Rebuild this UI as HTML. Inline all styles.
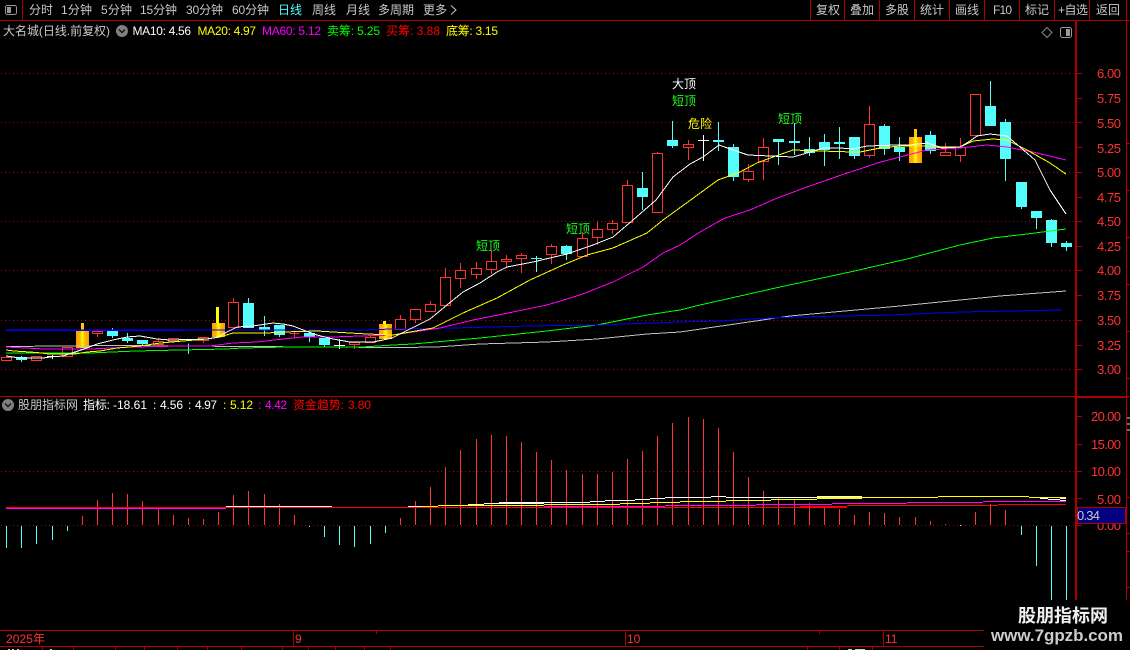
<!DOCTYPE html>
<html><head><meta charset="utf-8"><style>
html,body{margin:0;padding:0;background:#000;width:1130px;height:650px;overflow:hidden}
svg{display:block}
text{font-family:"Liberation Sans","WenQuanYi Zen Hei","Noto Sans CJK SC",sans-serif;font-size:12px;white-space:pre}
.g{fill:#c8c8c8}.ax{fill:#ff3232;font-size:13px}
.ln{fill:none;stroke-width:1;shape-rendering:crispEdges}
</style></head><body>
<svg width="1130" height="650" viewBox="0 0 1130 650" xmlns="http://www.w3.org/2000/svg">
<defs><linearGradient id="gold" x1="0" x2="1" y1="0" y2="0"><stop offset="0" stop-color="#ff9a00"/><stop offset=".3" stop-color="#ffb400"/><stop offset=".5" stop-color="#ffff00"/><stop offset=".7" stop-color="#ffb400"/><stop offset="1" stop-color="#ff9a00"/></linearGradient>
<pattern id="dot" x="1" y="0" width="4" height="1" patternUnits="userSpaceOnUse"><rect width="1" height="1" fill="#9a0a0a" shape-rendering="crispEdges"/></pattern></defs>
<rect width="1130" height="650" fill="#000"/>

<!-- grid -->
<g fill="url(#dot)" shape-rendering="crispEdges">
<rect x="0" y="73" width="1075" height="1"/><rect x="0" y="122" width="1075" height="1"/><rect x="0" y="172" width="1075" height="1"/><rect x="0" y="221" width="1075" height="1"/><rect x="0" y="270" width="1075" height="1"/><rect x="0" y="320" width="1075" height="1"/><rect x="0" y="369" width="1075" height="1"/><rect x="0" y="471" width="1075" height="1"/><rect x="0" y="525" width="1075" height="1"/>
</g>

<!-- red candles -->
<g shape-rendering="crispEdges">
<path stroke="#ff3232" fill="none" d="M97.5 329V337M158.5 339V346M173.5 338V343M203.5 337V343M233.5 298V303M294.5 332V338M354.5 342V349M370.5 335V338M400.5 315V320M415.5 319V323M430.5 301V305M445.5 268V278M460.5 263V288M476.5 262V279M491.5 250V274M506.5 255V268M521.5 253V273M551.5 244V264M582.5 232V257M597.5 221V245M612.5 220V234M627.5 180V186M657.5 152V154M688.5 140V160M748.5 164V182M763.5 138V180M869.5 106V158M945.5 143V153M960.5 138V162"/>
<path stroke="#ff3232" fill="#000" d="M1.5 357.5h10v3h-10zM31.5 356.5h10v4h-10zM62.5 347.5h10v9h-10zM92.5 331.5h10v2h-10zM153.5 341.5h10v3h-10zM168.5 338.5h10v3h-10zM198.5 337.5h10v3h-10zM228.5 302.5h10v25h-10zM289.5 333.5h10v0h-10zM349.5 342.5h10v2h-10zM365.5 337.5h10v5h-10zM395.5 319.5h10v10h-10zM410.5 309.5h10v10h-10zM425.5 304.5h10v7h-10zM440.5 277.5h10v28h-10zM455.5 270.5h10v8h-10zM471.5 268.5h10v6h-10zM486.5 261.5h10v8h-10zM501.5 259.5h10v2h-10zM516.5 255.5h10v3h-10zM546.5 246.5h10v8h-10zM577.5 238.5h10v18h-10zM592.5 229.5h10v8h-10zM607.5 223.5h10v6h-10zM622.5 185.5h10v37h-10zM652.5 153.5h10v59h-10zM683.5 144.5h10v3h-10zM743.5 171.5h10v8h-10zM758.5 147.5h10v14h-10zM864.5 124.5h10v31h-10zM940.5 152.5h10v3h-10zM955.5 147.5h10v8h-10zM970.5 94.5h10v41h-10z"/>
<!-- cyan candles -->
<path stroke="#54fcfc" fill="none" d="M21.5 356V362M112.5 328V338M127.5 333V343M142.5 340V345M188.5 343.5V354M264.5 316V336M279.5 325V337M309.5 333V342M324.5 338V347M536.5 256V272M566.5 245V260M642.5 172V210M672.5 121V148M718.5 122V151M733.5 144V181M778.5 139V165M794.5 123V155M809.5 137V156M824.5 134V166M839.5 127V159M854.5 137V159M884.5 124V155M899.5 137V161M930.5 131V154M990.5 81V107M1005.5 119V181M1021.5 182V209M1036.5 211V229M1051.5 219V247M1066.5 241V251"/>
<path fill="#54fcfc" d="M16 357h11v3H16zM107 331h11v5h-11zM122 338h11v3h-11zM137 340h11v4h-11zM183 339h11v1h-11zM243 303h11v25h-11zM248 298h1v5h-1zM259 327h11v3h-11zM274 325h11v10h-11zM304 333h11v4h-11zM319 338h11v7h-11zM531 258h11v1h-11zM561 246h11v8h-11zM637 188h11v9h-11zM667 140h11v6h-11zM713 140h11v2h-11zM728 147h11v30h-11zM773 139h11v3h-11zM789 141h11v2h-11zM804 149h11v4h-11zM819 142h11v8h-11zM834 142h11v2h-11zM849 137h11v19h-11zM879 126h11v23h-11zM894 147h11v5h-11zM925 135h11v16h-11zM985 106h11v20h-11zM1000 122h11v37h-11zM1016 182h11v25h-11zM1031 211h11v7h-11zM1046 220h11v23h-11zM1061 243h11v4h-11z"/>
<!-- white doji -->
<path stroke="#fff" fill="none" d="M47 356.5H58M52.5 355V359M334 345.5H345M339.5 339V349M698 140.5H709M703.5 135V161"/>
<!-- gold candles -->
<rect x="76" y="331" width="13" height="17" fill="url(#gold)"/><rect x="81" y="323" width="3" height="8" fill="#ffc800"/>
<rect x="212" y="323" width="13" height="14" fill="url(#gold)"/><rect x="216" y="307" width="3" height="16" fill="#ffff00"/>
<rect x="379" y="324" width="13" height="15" fill="url(#gold)"/><rect x="383" y="321" width="3" height="3" fill="#ffff00"/>
<rect x="909" y="137" width="13" height="26" fill="url(#gold)"/><rect x="914" y="129" width="3" height="8" fill="#ffc800"/>
</g>

<!-- MAs -->
<polyline class="ln" stroke="#c0c0c0" points="6,346.5 120,345.5 180,346 317,347 400,347.5 437,347 480,344 547,342 597,339 647,334 680,332 790,316 900,306 1000,296 1066,291"/>
<polyline class="ln" stroke="#00ff00" points="6,353 90,353 135,351 180,350 226,349 242,348 287,347 362,347 393,345 413,344 480,338 547,331 597,325 647,315 680,310 700,305 780,287 850,272 907,259 960,245 993,238 1027,234 1066,229"/>
<polyline class="ln" stroke="#0000ff" points="6,330.5 362,330 393,329 453,328 530,326 597,325 680,322 720,321 770,318 800,317 890,315 960,312 1062,310"/>
<path d="M6 330H362" stroke="#0000ff" stroke-width="1" shape-rendering="crispEdges"/>
<polyline class="ln" stroke="#ff00ff" points="6,347 45,349 90,349 133,347 180,346 210,346 233,343 257,342 283,339 303,337 333,337 360,336 393,335 440,328 473,320 513,312 547,305 580,295 613,282 643,267 663,253 680,245 700,232 725,218 750,210 775,199 807,187 847,173 860,169 877,163 900,157 927,150 960,148 987,145 1007,147 1033,152 1066,160"/>
<polyline class="ln" stroke="#ffff00" points="6,350 14,351 30,352 42,353 49,354 75,354 87,352 100,351 117,348 140,346 160,343 183,341 207,339 220,337 233,333 267,333 283,332 317,331 333,332 367,334 393,335 433,328 463,313 497,298 530,280 563,265 587,255 613,248 647,233 663,220 692,199 718,180 740,172 757,163 773,157 793,150 820,151 853,152 860,152 880,148 900,146 927,146 943,148 960,147 973,141 993,139 1007,140 1027,150 1050,163 1066,174"/>
<polyline class="ln" stroke="#ffffff" points="6,356 20,358 43,358 50,357 63,356 75,352 87,348 97,344 113,340 127,337 140,336 157,339 170,340 207,339 218,337 227,332 237,327 253,326 273,323 283,324 293,326 303,330 317,335 333,339 350,342 373,342 383,340 392,338 410,329 430,319 447,305 463,292 480,283 497,272 507,267 533,262 567,254 593,245 613,237 633,220 656,200 673,177 690,164 703,157 719,145 733,150 748,155 770,156 793,157 807,153 823,148 840,148 853,149 867,146 897,145 910,145 927,143 940,147 960,147 970,141 977,136 990,134 1007,136 1020,147 1035,160 1050,190 1066,214"/>

<!-- annotations -->
<text x="672" y="88" fill="#fff">大顶</text>
<text x="672" y="105" fill="#1cff1c">短顶</text>
<text x="688" y="128" fill="#ffff00">危险</text>
<text x="778" y="123" fill="#1cff1c">短顶</text>
<text x="476" y="250" fill="#1cff1c">短顶</text>
<text x="566" y="233" fill="#1cff1c">短顶</text>

<!-- lower bars -->
<g shape-rendering="crispEdges">
<path stroke="#54fcfc" fill="none" d="M6.5 526V548M21.5 526V548M36.5 526V544M52.5 526V540M67.5 526V531M309.5 526V527M324.5 526V537M339.5 526V545M354.5 526V547M370.5 526V544M385.5 526V533M960.5 525V526M1021.5 526V535M1036.5 526V566M1051.5 526V600M1066.5 526V600"/>
<path stroke="#ff3232" fill="none" d="M82.5 525V516M97.5 525V500M112.5 525V493M127.5 525V494M142.5 525V501M158.5 525V509M173.5 525V515M188.5 525V518M203.5 525V519M218.5 525V512M233.5 525V495M248.5 525V491M264.5 525V494M279.5 525V504M294.5 525V515M400.5 525V518M415.5 525V501M430.5 525V487M445.5 525V467M460.5 525V450M476.5 525V439M491.5 525V435M506.5 525V436M521.5 525V442M536.5 525V452M551.5 525V460M566.5 525V470M582.5 525V474M597.5 525V474M612.5 525V472M627.5 525V459M642.5 525V451M657.5 525V436M672.5 525V423M688.5 525V417M703.5 525V419M718.5 525V428M733.5 525V452M748.5 525V477M763.5 525V491M778.5 525V498M794.5 525V499M809.5 525V503M824.5 525V507M839.5 525V509M854.5 525V515M869.5 525V512M884.5 525V513M899.5 525V517M915.5 525V517M930.5 525V521M945.5 525V524M975.5 525V512M990.5 525V504M1005.5 525V510"/>
<!-- lower step lines -->
<path stroke="#ff0000" fill="none" d="M6 507.5H680M680 507.5H847M800 506.5H847M847 505.5H998M998 504.5H1066"/>
<path stroke="#ff00ff" fill="none" d="M6 508.5H226M544 506.5H665M665 505.5H756M756 504.5H832M832 503.5H907M907 502.5H983M983 501.5H1066"/>
<path stroke="#ffffff" fill="none" d="M226 506.5H332M408 506.5H423M468 504.5H484M484 503.5H499M499 503.5H544M499 502.5H544M544 502.5H590M590 501.5H605M605 500.5H635M635 499.5H650M650 498.5H665M665 497.5H680M680 497.5H711M711 496.5H726M726 497.5H756M756 497.5H817M817 496.5H862M1040 498.5H1048M1048 499.5H1060M1060 500.5H1066M1060 498.5H1066"/>
<path stroke="#ffff00" fill="none" d="M423 506.5H438M438 505.5H544M544 504.5H574M574 504.5H620M620 503.5H650M650 502.5H680M680 501.5H726M726 500.5H771M771 499.5H817M817 498.5H862M817 497.5H862M862 497.5H938M938 496.5H1029M1029 497.5H1066"/>
</g>

<!-- frame lines -->
<g fill="#ae0000" shape-rendering="crispEdges">
<rect x="0" y="20" width="1130" height="1"/>
<rect x="22" y="0" width="1" height="20"/>
<rect x="810" y="0" width="1" height="20"/><rect x="844" y="0" width="1" height="20"/><rect x="879" y="0" width="1" height="20"/><rect x="914" y="0" width="1" height="20"/><rect x="949" y="0" width="1" height="20"/><rect x="984" y="0" width="1" height="20"/><rect x="1019" y="0" width="1" height="20"/><rect x="1054" y="0" width="1" height="20"/><rect x="1089" y="0" width="1" height="20"/>
<rect x="1126" y="0" width="1" height="20"/>
<rect x="0" y="396" width="1130" height="1"/><rect x="1075" y="396" width="52" height="2"/>
<rect x="1075" y="21" width="2" height="609"/>
<rect x="1126" y="21" width="1" height="609"/>
<rect x="0" y="630" width="1130" height="1"/>
<rect x="0" y="646" width="1130" height="1"/>
<rect x="293" y="630" width="1" height="16"/><rect x="625" y="630" width="1" height="16"/><rect x="883" y="630" width="1" height="16"/>
<rect x="376" y="631" width="1" height="3"/><rect x="819" y="631" width="1" height="3"/>
<rect x="42" y="646" width="1" height="4"/><rect x="73" y="646" width="1" height="4"/><rect x="115" y="646" width="1" height="4"/><rect x="144" y="646" width="1" height="4"/><rect x="177" y="646" width="1" height="4"/><rect x="207" y="646" width="1" height="4"/><rect x="241" y="646" width="1" height="4"/><rect x="282" y="646" width="1" height="4"/><rect x="308" y="646" width="1" height="4"/><rect x="335" y="646" width="1" height="4"/><rect x="364" y="646" width="1" height="4"/><rect x="390" y="646" width="1" height="4"/><rect x="807" y="646" width="1" height="4"/><rect x="839" y="646" width="1" height="4"/><rect x="872" y="646" width="1" height="4"/>
<!-- axis ticks -->
<path d="M1077 73h5v1h-5zM1077 98h5v1h-5zM1077 122h5v1h-5zM1077 147h5v1h-5zM1077 172h5v1h-5zM1077 197h5v1h-5zM1077 221h5v1h-5zM1077 246h5v1h-5zM1077 270h5v1h-5zM1077 295h5v1h-5zM1077 320h5v1h-5zM1077 345h5v1h-5zM1077 369h5v1h-5zM1077 416h5v1h-5zM1077 444h5v1h-5zM1077 471h5v1h-5zM1077 498h5v1h-5zM1077 525h5v1h-5z"/>
<path d="M1127 143h3v1h-3zM1127 190h3v1h-3zM1127 237h3v1h-3zM1127 284h3v1h-3zM1127 331h3v1h-3zM1127 378h3v1h-3zM1127 497h3v1h-3zM1127 533h3v1h-3zM1127 551h3v1h-3zM1127 587h3v1h-3z"/>
</g>
<path d="M1127 418h3M1127 424h3M1127 430h3" stroke="#ddd" shape-rendering="crispEdges"/>

<!-- top toolbar -->
<rect x="5.5" y="5.5" width="11" height="9" rx="2" fill="#000" stroke="#999"/><rect x="7" y="7" width="4" height="6" fill="#999"/>
<text class="g" x="29" y="14">分时</text>
<text class="g" x="61" y="14" textLength="31">1分钟</text>
<text class="g" x="101" y="14" textLength="31">5分钟</text>
<text class="g" x="140" y="14" textLength="37">15分钟</text>
<text class="g" x="186" y="14" textLength="37">30分钟</text>
<text class="g" x="232" y="14" textLength="37">60分钟</text>
<text x="278" y="14" fill="#54fcfc">日线</text>
<text class="g" x="312" y="14">周线</text>
<text class="g" x="346" y="14">月线</text>
<text class="g" x="378" y="14">多周期</text>
<text class="g" x="423" y="14">更多</text>
<path d="M451 5.5l5 4.5l-5 4.5" fill="none" stroke="#c8c8c8"/>
<text class="g" x="816" y="14">复权</text>
<text class="g" x="850" y="14">叠加</text>
<text class="g" x="885" y="14">多股</text>
<text class="g" x="920" y="14">统计</text>
<text class="g" x="955" y="14">画线</text>
<text class="g" x="993" y="14" textLength="19">F10</text>
<text class="g" x="1025" y="14">标记</text>
<text class="g" x="1058" y="14" textLength="30">+自选</text>
<text class="g" x="1096" y="14">返回</text>

<!-- row 2 -->
<text class="g" x="3" y="35" textLength="107">大名城(日线.前复权)</text>
<circle cx="122" cy="31" r="6" fill="#808080"/><path d="M119 29.5l3 3l3-3" fill="none" stroke="#111" stroke-width="1.4"/>
<text x="132.5" y="35" fill="#fff" textLength="58.5">MA10: 4.56</text>
<text x="197.5" y="35" fill="#ffff00" textLength="58.5">MA20: 4.97</text>
<text x="262" y="35" fill="#ff00ff" textLength="59">MA60: 5.12</text>
<text x="327" y="35" fill="#00ff00" textLength="53">卖筹: 5.25</text>
<text x="386" y="35" fill="#ff0000" textLength="54">买筹: 3.88</text>
<text x="446" y="35" fill="#ffff00" textLength="52">底筹: 3.15</text>
<path d="M1047 27.5l5 5l-5 5l-5-5z" fill="none" stroke="#888"/>
<rect x="1060.5" y="27.5" width="11" height="10" rx="2" fill="#000" stroke="#999"/><rect x="1066" y="29" width="4" height="7" fill="#999"/>

<!-- axis labels upper -->
<text class="ax" x="1097" y="78" textLength="24">6.00</text><text class="ax" x="1097" y="103" textLength="24">5.75</text><text class="ax" x="1097" y="128" textLength="24">5.50</text><text class="ax" x="1097" y="153" textLength="24">5.25</text><text class="ax" x="1097" y="177" textLength="24">5.00</text><text class="ax" x="1097" y="202" textLength="24">4.75</text><text class="ax" x="1097" y="226" textLength="24">4.50</text><text class="ax" x="1097" y="251" textLength="24">4.25</text><text class="ax" x="1097" y="275" textLength="24">4.00</text><text class="ax" x="1097" y="300" textLength="24">3.75</text><text class="ax" x="1097" y="325" textLength="24">3.50</text><text class="ax" x="1097" y="350" textLength="24">3.25</text><text class="ax" x="1097" y="374" textLength="24">3.00</text>
<!-- axis labels lower -->
<text class="ax" x="1091" y="421" textLength="30">20.00</text><text class="ax" x="1091" y="449" textLength="30">15.00</text><text class="ax" x="1091" y="476" textLength="30">10.00</text><text class="ax" x="1097" y="504" textLength="24">5.00</text>
<text class="ax" x="1097" y="530" textLength="24">0.00</text>
<rect x="1077.5" y="507.5" width="48" height="16" fill="#000080" stroke="#ae0000"/>
<text x="1077" y="520" fill="#c8c8c8" style="font-size:13px" textLength="23">0.34</text>

<!-- lower header -->
<circle cx="8" cy="405" r="6" fill="#808080"/><path d="M5 403.5l3 3l3-3" fill="none" stroke="#111" stroke-width="1.4"/>
<text class="g" x="18" y="409">股朋指标网</text>
<text x="83" y="409" fill="#fff" textLength="27">指标:</text>
<text x="113" y="409" fill="#fff" textLength="34">-18.61</text>
<text x="153" y="409" fill="#fff">:</text><text x="160" y="409" fill="#fff" textLength="23">4.56</text>
<text x="188" y="409" fill="#fff">:</text><text x="195" y="409" fill="#fff" textLength="22">4.97</text>
<text x="223" y="409" fill="#ffff00">:</text><text x="230" y="409" fill="#ffff00" textLength="23">5.12</text>
<text x="258" y="409" fill="#ff00ff">:</text><text x="265" y="409" fill="#ff00ff" textLength="22">4.42</text>
<text x="293" y="409" fill="#ff0000" textLength="51">资金趋势:</text>
<text x="348" y="409" fill="#ff0000" textLength="23">3.80</text>

<!-- timeline -->
<text x="6" y="643" fill="#ff3232" textLength="39">2025年</text>
<text x="295" y="643" fill="#ff3232">9</text>
<text x="627" y="643" fill="#ff3232">10</text>
<text x="885" y="643" fill="#ff3232">11</text>
<path d="M8 649.5h2M12 649.5h2M17 649.5h2M50 649.5h2M848 649.5h4M855 649.5h10" stroke="#ccc" shape-rendering="crispEdges"/>

<!-- watermark -->
<rect x="984" y="600" width="146" height="50" fill="#000"/>
<text x="1018" y="622" fill="#f0f0f0" style="font-size:18px;font-weight:bold">股朋指标网</text>
<text x="991" y="641" fill="#cccccc" style="font-size:17px;font-weight:bold" textLength="132">www.7gpzb.com</text>
</svg>
</body></html>
